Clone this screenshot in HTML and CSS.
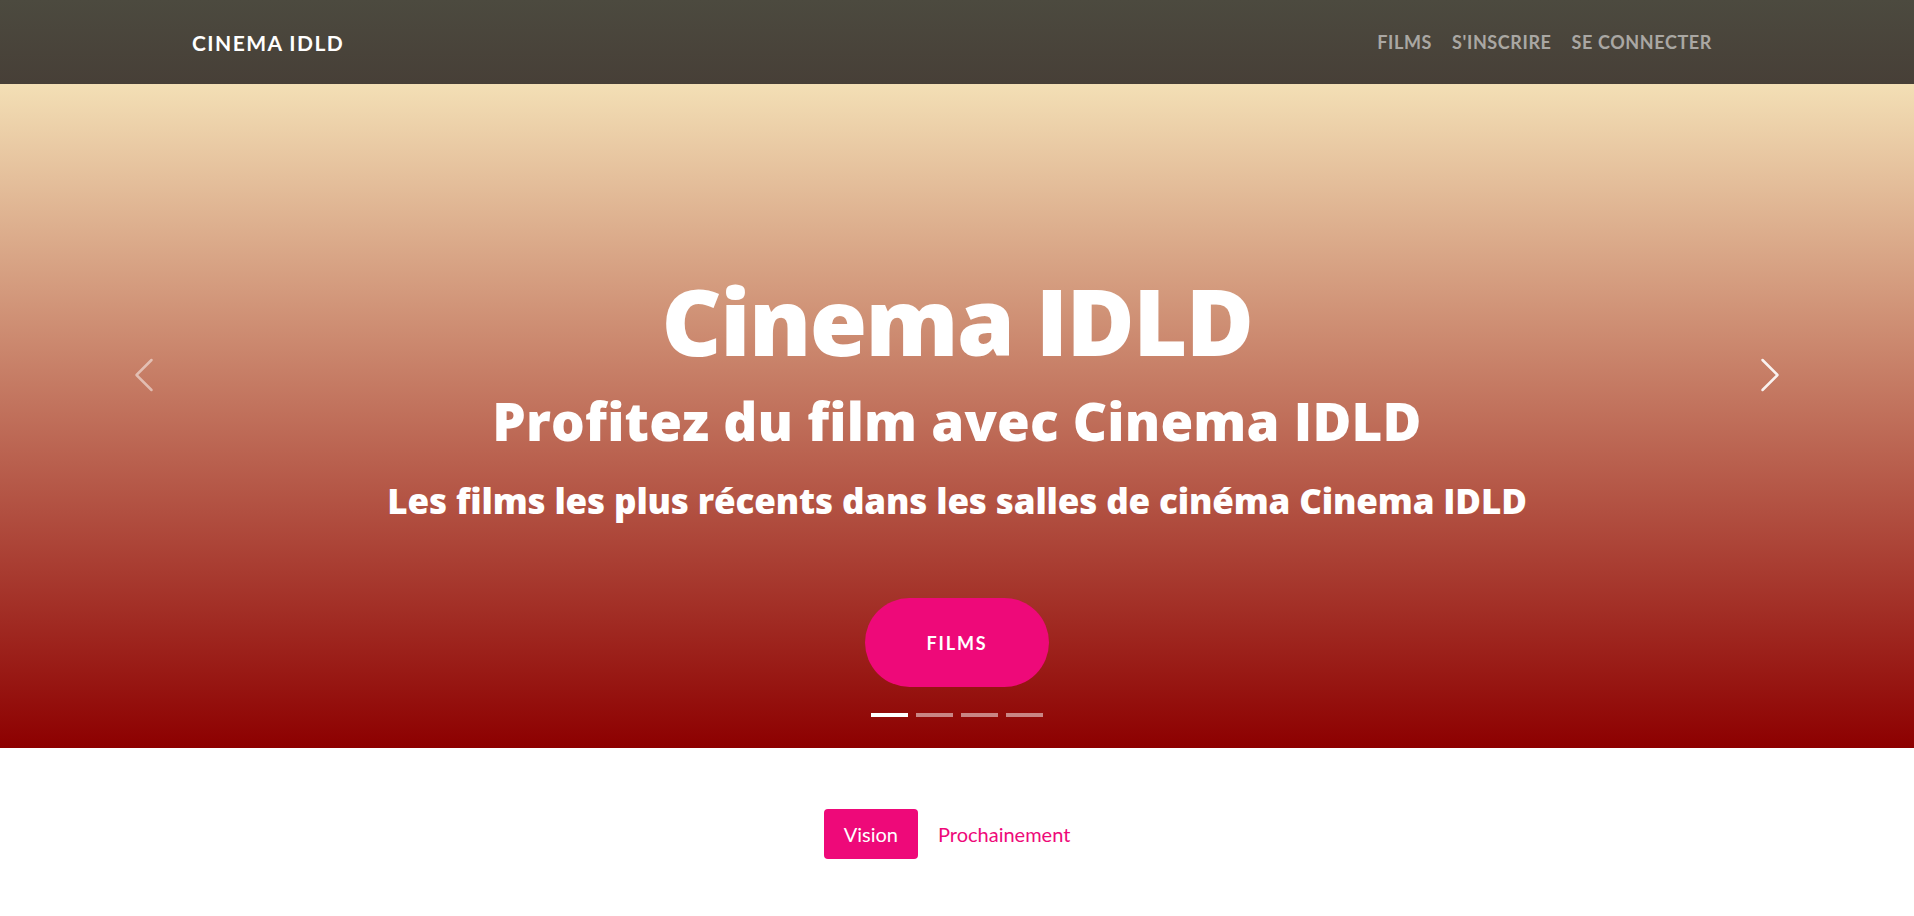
FILE: index.html
```html
<!DOCTYPE html>
<html lang="fr">
<head>
<meta charset="utf-8">
<title>Cinema IDLD</title>
<link rel="stylesheet" href="styles.css">
</head>
<body>
<nav class="navbar">
  <a class="brand" href="#">Cinema IDLD</a>
  <ul class="nav-links">
    <li><a href="#">Films</a></li>
    <li><a href="#">S'inscrire</a></li>
    <li><a href="#">Se connecter</a></li>
  </ul>
</nav>
<header class="hero">
  <a class="control control-prev" href="#" aria-label="Précédent">
    <svg viewBox="0 0 16 16" width="40" height="40" fill="#fff"><path d="M11.354 1.646a.5.5 0 0 1 0 .708L5.707 8l5.647 5.646a.5.5 0 0 1-.708.708l-6-6a.5.5 0 0 1 0-.708l6-6a.5.5 0 0 1 .708 0z"/></svg>
  </a>
  <div class="hero-content">
    <h1 class="hero-title">Cinema IDLD</h1>
    <h2 class="hero-sub">Profitez du film avec Cinema IDLD</h2>
    <h3 class="hero-lead">Les films les plus récents dans les salles de cinéma Cinema IDLD</h3>
    <a class="btn-xl" href="#">Films</a>
  </div>
  <a class="control control-next" href="#" aria-label="Suivant">
    <svg viewBox="0 0 16 16" width="40" height="40" fill="#fff"><path d="M4.646 1.646a.5.5 0 0 1 .708 0l6 6a.5.5 0 0 1 0 .708l-6 6a.5.5 0 0 1-.708-.708L10.293 8 4.646 2.354a.5.5 0 0 1 0-.708z"/></svg>
  </a>
  <ol class="indicators">
    <li class="indicator active"></li>
    <li class="indicator"></li>
    <li class="indicator"></li>
    <li class="indicator"></li>
  </ol>
</header>
<section class="tabs-section">
  <ul class="pills">
    <li><a class="pill active" href="#">Vision</a></li>
    <li><a class="pill" href="#">Prochainement</a></li>
  </ul>
</section>
</body>
</html>
```

FILE: styles.css
```css
* { box-sizing: border-box; }

body {
  margin: 0;
  background: #fff;
  font-family: "Lato", "Open Sans", sans-serif;
}

a { text-decoration: none; }

.navbar {
  height: 84px;
  display: flex;
  align-items: center;
  justify-content: space-between;
  padding: 0 192px;
  background: linear-gradient(to bottom, #4c4a3f, #473f37);
}

.brand {
  color: #fff;
  font-family: "Lato", sans-serif;
  font-weight: 700;
  font-size: 21px;
  letter-spacing: 1.45px;
  text-transform: uppercase;
}

.nav-links {
  list-style: none;
  margin: 0;
  padding: 0;
  display: flex;
}

.nav-links a {
  display: block;
  padding: 0 10px;
  color: rgba(255, 255, 255, 0.55);
  font-family: "Lato", sans-serif;
  font-weight: 700;
  font-size: 18px;
  letter-spacing: 0.6px;
  text-transform: uppercase;
}

.hero {
  position: relative;
  height: 664px;
  padding-top: 186px;
  background: linear-gradient(to bottom, #f3dfb5 0%, #8d0000 100%);
  color: #fff;
  text-align: center;
}

.hero-content {
  display: flex;
  flex-direction: column;
  align-items: center;
}

.hero-title,
.hero-sub,
.hero-lead {
  margin: 0;
  font-family: "Open Sans", sans-serif;
  font-weight: 800;
  white-space: nowrap;
}

.hero-title {
  font-size: 93px;
  line-height: 100px;
  letter-spacing: -1.6px;
}

.hero-sub {
  margin-top: 21px;
  font-size: 53px;
  line-height: 60px;
  letter-spacing: 0.2px;
}

.hero-lead {
  margin-top: 28px;
  font-size: 35px;
  line-height: 44px;
  letter-spacing: -0.14px;
}

.btn-xl {
  margin-top: 75px;
  width: 184px;
  height: 89px;
  display: flex;
  align-items: center;
  justify-content: center;
  border-radius: 160px;
  background: #ee0979;
  color: #fff;
  font-family: "Lato", sans-serif;
  font-weight: 700;
  font-size: 18px;
  letter-spacing: 1.8px;
  text-transform: uppercase;
}

.control {
  position: absolute;
  top: 271px;
  width: 40px;
  height: 40px;
  display: block;
}

.control svg { display: block; }

.control-prev { left: 124px; opacity: 0.5; }
.control-next { right: 124px; opacity: 0.9; }

.indicators {
  position: absolute;
  left: 0;
  right: 0;
  bottom: 31px;
  margin: 0;
  padding: 0;
  list-style: none;
  display: flex;
  justify-content: center;
  gap: 8px;
}

.indicator {
  width: 37px;
  height: 4px;
  background: rgba(255, 255, 255, 0.5);
}

.indicator.active { background: #fff; }

.tabs-section {
  padding-top: 61px;
  display: flex;
  justify-content: center;
}

.pills {
  list-style: none;
  margin: 0;
  padding: 0;
  display: flex;
}

.pill {
  display: block;
  padding: 10px 20px;
  line-height: 30px;
  font-family: "Lato", sans-serif;
  font-size: 20px;
  color: #ee0979;
  border-radius: 4px;
}

.pill.active {
  background: #ee0979;
  color: #fff;
}
```
